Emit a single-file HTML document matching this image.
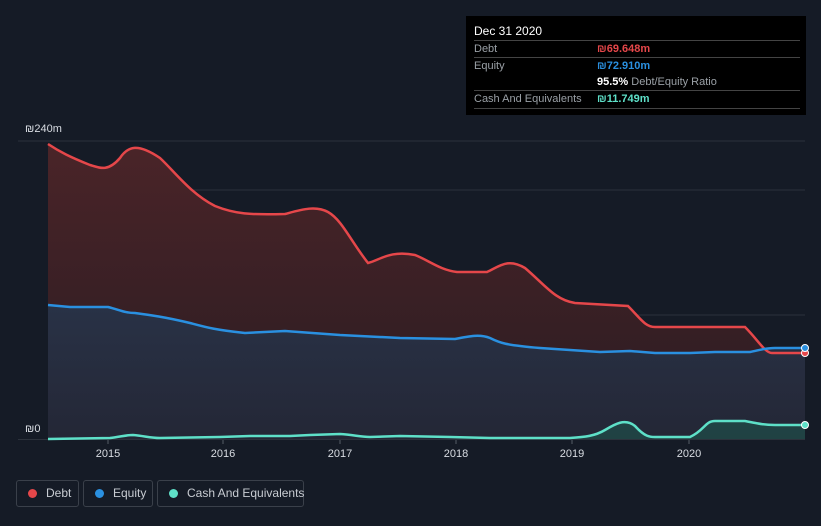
<!DOCTYPE html>
<html><head><meta charset="utf-8"><style>
html,body{margin:0;width:821px;height:526px;overflow:hidden}
body{background:#151b26;font-family:"Liberation Sans",sans-serif;position:relative}
.tt{position:absolute;left:466px;top:16px;width:340px;height:99px;background:#000;color:#fff;font-size:11px}
.row{position:absolute;left:8px;right:6px;border-top:1px solid #444;height:17px;line-height:17px;color:#9aa0a6}
.leg{position:absolute;top:480px;height:27px;border:1px solid #3a404a;border-radius:3px;color:#c8ccd2;font-size:12px;line-height:25px;box-sizing:border-box;white-space:nowrap}
.leg i{display:inline-block;width:9px;height:9px;border-radius:50%;margin:0 9px 0 11px;vertical-align:-1px}
</style></head><body>
<svg width="821" height="526" style="position:absolute;left:0;top:0">
<defs>
<linearGradient id="dg" x1="0" y1="0" x2="0" y2="1"><stop offset="0" stop-color="#4a2428"/><stop offset="1" stop-color="#2a1c22"/></linearGradient>
<linearGradient id="eg" x1="0" y1="0" x2="0" y2="1"><stop offset="0" stop-color="#27344a"/><stop offset="1" stop-color="#232838"/></linearGradient>
</defs>
<g stroke="#2c323c" stroke-width="1">
<line x1="18" y1="141" x2="805" y2="141"/><line x1="48" y1="190" x2="805" y2="190"/><line x1="48" y1="315" x2="805" y2="315"/><line x1="18" y1="439.5" x2="805" y2="439.5"/>
</g>
<path fill="url(#dg)" d="M48,144 C60,152 70,157 90,165 C100,168 108,172 120,158 C128,146 138,143 160,158 C175,172 190,193 215,206 C235,214 250,215 285,214 C300,210 315,205 328,212 C342,220 350,240 368,263 C380,260 390,250 415,255 C430,261 440,270 457,272 L487,272 C500,266 508,258 525,268 C545,285 555,300 575,303 L628,306 C640,318 645,327 655,327 L745,327 C758,340 765,353 772,353 L805,353 L805,439 L48,439 Z"/>
<path fill="url(#eg)" d="M48,305 L70,307 L108,307 C120,310 125,313 135,313 C150,315 165,317 190,323 C205,327 215,330 245,333 L285,331 L340,335 L400,338 L455,339 C470,336 480,334 490,338 C500,343 505,345 540,348 L600,352 L630,351 L655,353 L690,353 L715,352 L750,352 C760,350 765,348 775,348 L805,348 L805,439 L48,439 Z" opacity=".9"/>
<path fill="#1f4a47" opacity=".8" d="M570,438 C585,437 595,436 605,430 C615,424 625,418 635,426 C645,437 650,437 655,437 L690,437 C705,430 705,421 715,421 L745,421 C760,424 765,425 775,425 L805,425 L805,439 L570,439Z"/>
<path fill="none" stroke="#e5474a" stroke-width="2.5" d="M48,144 C60,152 70,157 90,165 C100,168 108,172 120,158 C128,146 138,143 160,158 C175,172 190,193 215,206 C235,214 250,215 285,214 C300,210 315,205 328,212 C342,220 350,240 368,263 C380,260 390,250 415,255 C430,261 440,270 457,272 L487,272 C500,266 508,258 525,268 C545,285 555,300 575,303 L628,306 C640,318 645,327 655,327 L745,327 C758,340 765,353 772,353 L805,353"/>
<path fill="none" stroke="#2a90e0" stroke-width="2.5" d="M48,305 L70,307 L108,307 C120,310 125,313 135,313 C150,315 165,317 190,323 C205,327 215,330 245,333 L285,331 L340,335 L400,338 L455,339 C470,336 480,334 490,338 C500,343 505,345 540,348 L600,352 L630,351 L655,353 L690,353 L715,352 L750,352 C760,350 765,348 775,348 L805,348"/>
<path fill="none" stroke="#5ee0c8" stroke-width="2.5" d="M48,439 L110,438 C120,437 125,435 133,435 C145,436 150,438 160,438 L220,437 L250,436 L290,436 L310,435 L340,434 C355,435 360,437 370,437 L400,436 L450,437 L490,438 L570,438 C585,437 595,436 605,430 C615,424 625,418 635,426 C645,437 650,437 655,437 L690,437 C705,430 705,421 715,421 L745,421 C760,424 765,425 775,425 L805,425"/>
<circle cx="805" cy="353" r="3.5" fill="#e5474a" stroke="#fff" stroke-width="1"/>
<circle cx="805" cy="348" r="3.5" fill="#2a90e0" stroke="#fff" stroke-width="1"/>
<circle cx="805" cy="425" r="3.5" fill="#5ee0c8" stroke="#fff" stroke-width="1"/>
<g stroke="#555c66"><line x1="108" y1="440" x2="108" y2="444"/><line x1="223" y1="440" x2="223" y2="444"/><line x1="340" y1="440" x2="340" y2="444"/><line x1="456" y1="440" x2="456" y2="444"/><line x1="572" y1="440" x2="572" y2="444"/><line x1="689" y1="440" x2="689" y2="444"/></g>
<g fill="#d8dce2" font-size="11" text-anchor="middle" font-family="Liberation Sans"><text x="108" y="457">2015</text><text x="223" y="457">2016</text><text x="340" y="457">2017</text><text x="456" y="457">2018</text><text x="572" y="457">2019</text><text x="689" y="457">2020</text></g>
<g fill="#d8dce2" font-size="11" font-family="Liberation Sans"><text x="25" y="132">₪240m</text><text x="25" y="432">₪0</text></g>
</svg>
<div class="tt">
<div style="position:absolute;left:8px;top:8px;font-size:12px">Dec 31 2020</div>
<div class="row" style="top:24px">Debt<span style="position:absolute;left:123px;color:#e5474a;font-weight:bold">₪69.648m</span></div>
<div class="row" style="top:41px">Equity<span style="position:absolute;left:123px;color:#2a90e0;font-weight:bold">₪72.910m</span></div>
<div style="position:absolute;left:131px;top:58px;line-height:17px;color:#9aa0a6"><b style="color:#fff">95.5%</b> Debt/Equity Ratio</div>
<div class="row" style="top:74px;border-bottom:1px solid #444">Cash And Equivalents<span style="position:absolute;left:123px;color:#5ee0c8;font-weight:bold">₪11.749m</span></div>
</div>
<div class="leg" style="left:16px;width:63px"><i style="background:#e5474a"></i>Debt</div>
<div class="leg" style="left:83px;width:70px"><i style="background:#2a90e0"></i>Equity</div>
<div class="leg" style="left:157px;width:147px"><i style="background:#5ee0c8"></i>Cash And Equivalents</div>
</body></html>
